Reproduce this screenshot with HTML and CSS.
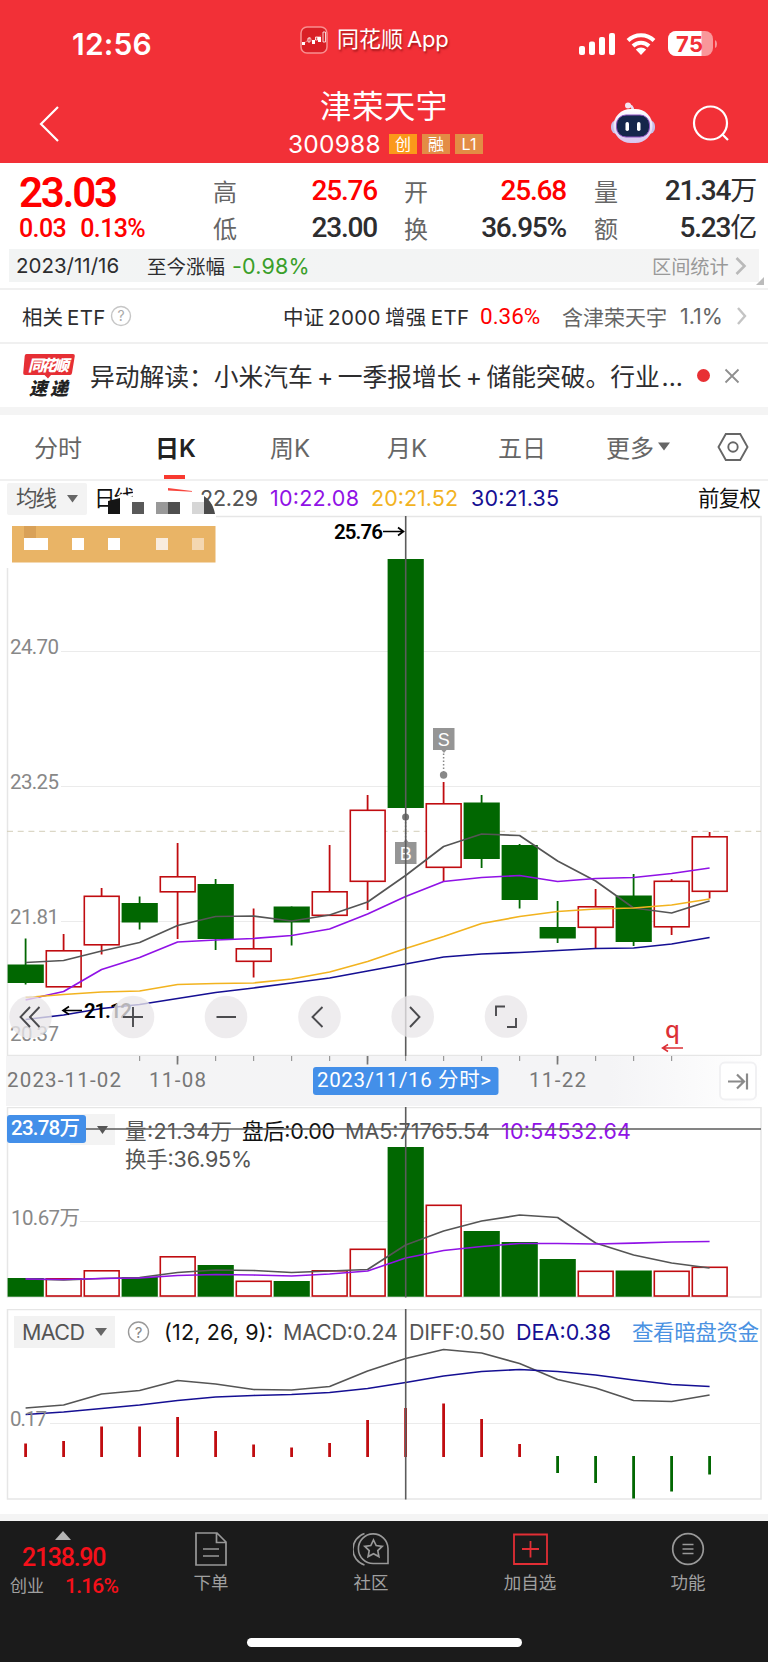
FILE: index.html
```html
<!DOCTYPE html>
<html lang="zh-CN">
<head>
<meta charset="utf-8">
<title>津荣天宇 300988</title>
<link rel="stylesheet" href="styles.css">
</head>
<body>
<header class="top">
  <div class="status">
    <span class="clock">12:56</span>
    <span class="source">
      <svg width="28" height="28" viewBox="0 0 28 28"><rect x="1" y="1" width="26" height="26" rx="6" fill="#d91f26" stroke="#f98f90" stroke-width="1.5"/><path d="M2 17l4-1 4-5 3 6 4-6 4-1" fill="none" stroke="#f7a5a5" stroke-width=".6"/><path d="M2 16h3v3H2zM12 14h3v4h-3zM18 11h3v5h-3z" fill="#fff"/><path d="M8 12h2v4H8zM15.500 11h2v3h-2zM23 6h2.500v10H23z" fill="none" stroke="#fff" stroke-width=".8"/></svg>
      <span class="source-name">同花顺<span class="app">App</span></span>
    </span>
    <span class="signals">
      <svg class="bars" width="36" height="24" viewBox="0 0 36 24"><g fill="#fff"><rect y="14" width="6" height="9" rx="2"/><rect x="10" y="9.500" width="6" height="13.500" rx="2"/><rect x="20" y="5" width="6" height="18" rx="2"/><rect x="30" y="1" width="6" height="22" rx="2"/></g></svg>
      <svg class="wifi" width="30" height="24" viewBox="0 0 30 24"><g fill="none" stroke="#fff" stroke-width="4"><path d="M2 8.500a18.500 18.500 0 0 1 26 0"/><path d="M7 14a11.500 11.500 0 0 1 16 0"/></g><path d="M9.800 17.500a7.500 7.500 0 0 1 10.400 0L15 23z" fill="#fff"/></svg>
      <svg width="50" height="26" viewBox="0 0 50 26"><defs><clipPath id="cell"><rect width="45" height="25" rx="8"/></clipPath></defs><g clip-path="url(#cell)"><rect width="45" height="26" fill="#f9979a"/><rect width="33.500" height="26" fill="#fff"/></g><path d="M47 9q2 1 2 4t-2 4z" fill="#f9979a"/><text x="8" y="20.500" class="cell-text" textLength="27">75</text></svg>
    </span>
  </div>
  <div class="nav">
    <svg class="back" width="22" height="38" viewBox="0 0 22 38"><path d="M20 2L3 19l17 17" fill="none" stroke="#fff" stroke-width="2.200"/></svg>
    <div class="heading">
      <h1>津荣天宇</h1>
      <div class="code"><span class="digits">300988</span><b class="tag hot">创</b><b class="tag">融</b><b class="tag">L1</b></div>
    </div>
    <div class="tools">
      <svg width="44" height="42" viewBox="0 0 44 42"><defs><linearGradient id="shell" x2="0" y2="1"><stop stop-color="#fff"/><stop offset="1" stop-color="#d8c5ee"/></linearGradient></defs><path d="M16 3q6 0 6 6" fill="none" stroke="#eadcf0" stroke-width="2.500"/><circle cx="17" cy="3.500" r="3" fill="#f4e4f2"/><rect x="0" y="18" width="44" height="14" rx="6" fill="#c5bfe8"/><rect x="2.500" y="7" width="39" height="34" rx="17" fill="url(#shell)"/><rect x="5.500" y="13" width="33" height="22" rx="9.500" fill="#15264b" stroke="#8b50bd"/><rect x="14.500" y="20" width="3.500" height="9" rx="1.700" fill="#fff"/><rect x="26" y="20" width="3.500" height="9" rx="1.700" fill="#fff"/></svg>
      <svg width="38" height="38" viewBox="0 0 38 38"><circle cx="18.500" cy="18" r="16.500" fill="none" stroke="#fff" stroke-width="2.200"/><path d="M30 29l6 6" stroke="#fff" stroke-width="2.200"/></svg>
    </div>
  </div>
</header>

<section class="quote">
  <div class="last"><span class="price">23.03</span><span class="delta"><i>0.03</i><i>0.13%</i></span></div>
  <div class="stats">
    <span>高</span><b class="up">25.76</b><span>开</span><b class="up">25.68</b><span>量</span><b>21.34<em>万</em></b>
    <span>低</span><b>23.00</b><span>换</span><b>36.95%</b><span>额</span><b>5.23<em>亿</em></b>
  </div>
</section>

<section class="range">
  <div class="range-bar">
    <span class="range-date">2023/11/16</span><span class="range-label">至今涨幅</span><span class="range-value">-0.98%</span>
    <span class="range-link">区间统计</span>
    <svg width="12" height="20" viewBox="0 0 12 20"><path d="M1.500 2l8 8-8 8" fill="none" stroke="#b9b9b9" stroke-width="2.600"/></svg>
  </div>
  <i class="fold"></i>
</section>

<section class="etf">
  <span class="c1">相关<u>ETF</u></span>
  <svg width="22" height="22" viewBox="0 0 22 22"><circle cx="11" cy="11" r="9.500" fill="none" stroke="#c6c6c6" stroke-width="1.400"/><text x="11" y="16" class="hint">?</text></svg>
  <span class="c2">中证<u>2000</u><u>增强</u><u>ETF</u></span><span class="c3">0.36%</span><span class="c4">含津荣天宇</span><span class="c5">1.1%</span>
  <svg width="12" height="20" viewBox="0 0 12 20"><path d="M2 2l7 8-7 8" fill="none" stroke="#c4c4c4" stroke-width="2.400"/></svg>
</section>

<section class="news">
  <svg width="54" height="46" viewBox="0 0 54 46"><path d="M4.500 1H51q2 0 1.800 2L50 20q-.3 2-2 2H29l-3 3.500L22.500 22H3q-2 0-1.800-2L2.700 3q.2-2 1.800-2z" fill="#e62f35"/><text x="6" y="18" class="badge-a" textLength="41">同花顺</text><text x="7" y="42" class="badge-b" textLength="39">速递</text></svg>
  <span class="news-text">异动解读：小米汽车<u>+</u>一季报增长<u>+</u>储能突破。行业<u>...</u></span>
  <i class="dot"></i>
  <svg width="16" height="16" viewBox="0 0 16 16"><path d="M1.500 1.500l13 13m0-13l-13 13" stroke="#8f8f8f" stroke-width="1.800"/></svg>
</section>

<nav class="tabs">
  <span>分时</span><span class="on">日K</span><span>周K</span><span>月K</span><span>五日</span><span>更多<svg class="caret" width="12" height="9" viewBox="0 0 12 9"><path d="M0 .5h12L6 8.500z" fill="#666"/></svg></span>
  <svg width="32" height="30" viewBox="0 0 32 30"><path d="M8.800 2h14.400L30.500 15l-7.300 13H8.800L1.500 15z" fill="none" stroke="#666" stroke-width="1.900"/><circle cx="16" cy="15" r="4.700" fill="none" stroke="#666" stroke-width="1.900"/></svg>
</nav>

<main>
<svg class="chart" width="768" height="626" viewBox="0 481 768 626">
  <defs><linearGradient id="axis"><stop stop-color="#f4f4f5"/><stop offset=".8" stop-color="#f4f4f6"/><stop offset="1" stop-color="#fff"/></linearGradient></defs>
  <rect x="7" y="483" width="80" height="32" rx="2" fill="#f3f3f3"/>
  <text x="16" y="505.500" class="t cjk" textLength="41">均线</text><path d="M67 495h11l-5.500 7.500z" fill="#666"/>
  <text x="94" y="505.500" class="t cjk black" textLength="41">日线</text>
  <text x="200" y="506" class="t" textLength="58">22.29</text>
  <text x="270" y="506" class="t purple" textLength="89">10:22.08</text>
  <text x="371" y="506" class="t gold" textLength="87">20:21.52</text>
  <text x="471" y="506" class="t navy" textLength="88">30:21.35</text>
  <text x="698" y="505.500" class="t cjk black" textLength="63">前复权</text>
  <path d="M216 516.500H761V1055.500" class="frame"/><path d="M7.500 568V1055.500H761" class="frame"/>
  <path d="M108 506l5-6 8-6 14 3V520h-27z" fill="#fff"/><path d="M133 482h60q5 8 9 14 10 8 14 20h-83z" fill="#fff"/>
  <text x="200" y="506" class="t fade" textLength="58">22.29</text>
  <path d="M108 501l12-3v16h-12z" fill="#151515"/><rect x="132" y="502" width="12" height="12" fill="#595959"/><rect x="156" y="502" width="12" height="12" fill="#999"/><rect x="168" y="502" width="12" height="12" fill="#4f4f4f"/><rect x="192" y="502" width="12" height="12" fill="#d6d6d6"/><path d="M204 496q9 6 11 18h-11z" fill="#4b4b4b"/><path d="M168 488l24 3v.8l-24-1.200z" fill="#f8453d"/>
  <rect x="12" y="526" width="203.500" height="36.500" fill="#e9b466"/><rect x="24" y="526" width="12" height="12" fill="#d9a158"/><path d="M24 538h24v12H24zM72 538h12v12H72zM108 538h12v12h-12z" fill="#fff"/><rect x="156" y="538" width="12" height="12" fill="#f9ecde"/><rect x="192" y="538" width="12" height="12" fill="#f4d7b1"/>
  <path d="M61 651.500H761M61 786.500H761M61 921.500H761" class="grid"/>
  <g class="scale"><text x="10" y="654" textLength="49">24.70</text><text x="10" y="789" textLength="49">23.25</text><text x="10" y="924" textLength="49">21.81</text></g>
  <path d="M7 831.300H761" stroke="#d3ceb8" stroke-dasharray="6 4.700"/>
  <g id="candles"></g>
  <text x="334" y="539" class="mark" textLength="49">25.76</text><path d="M383 531.500h20m-5-4l5.500 4-5.500 4" class="arrow"/>
  <path d="M82 1010.500H64m5-4l-6 4 6 4" class="arrow"/><text x="84" y="1018" class="mark" textLength="48">21.12</text>
  <text x="10" y="1041" class="scale" textLength="49">20.37</text>
  <path d="M405.600 822v20M443.600 750v22" stroke="#888" stroke-width="1.500" stroke-dasharray="1.500 2"/><circle cx="405.600" cy="817" r="3.500" fill="#777"/><circle cx="443.600" cy="775" r="3.700" fill="#888"/>
  <path d="M434 728h20.500v22h-8l-2.500 3-2.500-3H433v-22z" fill="#959595"/><text x="443.700" y="746" class="flag">S</text>
  <path d="M395 842h8.500l2.500-3 2.500 3h8v22H395z" fill="#959595"/><text x="405.700" y="860" class="flag">B</text>
  <path d="M405.700 516V1061" class="cross"/>
  <g fill="#e9e7e9" fill-opacity=".78"><circle cx="30.500" cy="1017" r="21.300"/><circle cx="133" cy="1017" r="21.300"/><circle cx="226" cy="1017" r="21.300"/><circle cx="319.500" cy="1017" r="21.300"/><circle cx="412.700" cy="1016.500" r="21.300"/><circle cx="506" cy="1016.500" r="21.300"/></g>
  <path d="M30 1007l-9.500 10 9.500 10m9.500-20l-9.500 10 9.500 10M123 1017h20m-10-10v20M216.500 1017H236M322.500 1007l-10 10 10 10M410 1007l9.500 10-9.500 10M496 1016v-9.500h9M516 1018v9h-9" fill="none" stroke="#4b4b4e" stroke-width="1.900"/>
  <text x="665" y="1037.500" class="q">q</text><path d="M683 1048h-20m5-3.500l-5.500 3.500 5.500 3.500" fill="none" stroke="#dc3036" stroke-width="1.500"/>
  <rect x="6" y="1056" width="755" height="50" fill="url(#axis)"/><path id="ticks" stroke="#999" stroke-width="1.200"/><path d="M177.500 1056v8.500m190-8.500v8.500m190-8.500v8.500" stroke="#777" stroke-width="1.700"/>
  <g class="date"><text x="7" y="1087" textLength="114">2023-11-02</text><text x="149" y="1087" textLength="57">11-08</text><text x="529" y="1087" textLength="57">11-22</text></g>
  <rect x="313" y="1067" width="185.500" height="28" rx="3" fill="#438fe9"/><text x="317" y="1087" class="date sel" textLength="174">2023/11/16 分时&gt;</text>
  <rect x="720" y="1062.500" width="36" height="37" rx="5" fill="#fff" stroke="#f1f1f3" stroke-width="2"/><path d="M728 1081.500h15m-6-7l7 7-7 7M747 1073.500v16" fill="none" stroke="#8a8a8a" stroke-width="2.200"/>
</svg>
<svg class="chart" width="768" height="202" viewBox="0 1107 768 202">
  <rect x="7.500" y="1107.500" width="753.500" height="189.500" class="frame"/><path d="M80 1221.500H761" class="grid"/>
  <rect x="70" y="1114" width="45" height="31" fill="#f3f3f3"/>
  <g id="volume"></g>
  <text x="125" y="1138.500" class="t" textLength="107">量:21.34万</text><text x="242" y="1138.500" class="t black" textLength="93">盘后:0.00</text><text x="345" y="1138.500" class="t" textLength="145">MA5:71765.54</text><text x="501" y="1138.500" class="t purple" textLength="130">10:54532.64</text>
  <text x="125" y="1167" class="t" textLength="127">换手:36.95%</text>
  <text x="11" y="1225" class="scale" textLength="69">10.67万</text>
  <path d="M97 1126h11l-5.500 8z" fill="#555"/>
  <path d="M86 1129H761M405.700 1107V1297.500" class="cross"/>
  <rect x="7" y="1115" width="79" height="28" rx="3" fill="#438fe9"/><text x="11" y="1135" class="date sel bold" textLength="69">23.78万</text>
</svg>
<svg class="chart" width="768" height="205" viewBox="0 1309 768 205">
  <rect x="7.500" y="1309.500" width="753.500" height="189.500" class="frame"/><path d="M50 1423.500H761" class="grid"/>
  <rect x="14" y="1316" width="101" height="32" fill="#f2f2f2"/><text x="22" y="1340" class="t" textLength="63">MACD</text><path d="M95 1328h12l-6 8z" fill="#666"/>
  <circle cx="138.500" cy="1332" r="10" fill="none" stroke="#999" stroke-width="1.400"/><text x="138.500" y="1337.500" class="hint dark">?</text>
  <text x="164" y="1340" class="t black" textLength="109">(12, 26, 9):</text><text x="283" y="1340" class="t" textLength="115">MACD:0.24</text><text x="409" y="1340" class="t" textLength="96">DIFF:0.50</text><text x="516" y="1340" class="t navy" textLength="95">DEA:0.38</text><text x="632" y="1340" class="t link" textLength="127">查看暗盘资金</text>
  <g id="macd"></g>
  <text x="10" y="1426" class="scale" textLength="37">0.17</text>
  <path d="M405.700 1309V1499.500" class="cross"/>
</svg>
</main>

<footer class="dock">
  <div class="index"><svg width="16" height="9" viewBox="0 0 16 9"><path d="M0 9L8 0l8 9z" fill="#b5b5b5"/></svg><b>2138.90</b><span><small>创业</small><i>1.16%</i></span></div>
  <div class="item"><svg width="32" height="34" viewBox="0 0 32 34"><path d="M1 1h21l9 9v23H1zM21.500 1v9.500H31M8 17h16M8 24h16" fill="none" stroke="#999" stroke-width="1.700"/></svg><span>下单</span></div>
  <div class="item"><svg width="36" height="34" viewBox="0 0 36 34"><path d="M11.500 1.500A16.500 16.500 0 0 0 11.500 33M35 31.500H20.500a14.800 14.800 0 1 1 14.500-15z" fill="none" stroke="#999" stroke-width="1.600"/><path d="M20.500 8l2.700 5.500 6 .9-4.400 4.200 1.100 6-5.400-2.800-5.400 2.800 1.100-6-4.400-4.200 6-.9z" fill="none" stroke="#999" stroke-width="1.700"/></svg><span>社区</span></div>
  <div class="item"><svg width="35" height="34" viewBox="0 0 35 34"><path d="M1 2.500h33v29.500H1zM9 17h17M17.500 9v16.500" fill="none" stroke="#e22e35" stroke-width="1.800"/></svg><span>加自选</span></div>
  <div class="item"><svg width="34" height="34" viewBox="0 0 34 34"><circle cx="17" cy="17" r="15.300" fill="none" stroke="#999" stroke-width="1.700"/><path d="M11.500 12.500h11M11.500 17h11M11.500 21.500h11" stroke="#999" stroke-width="1.700"/></svg><span>功能</span></div>
  <i class="home"></i>
</footer>
<script src="chart.js"></script>
</body>
</html>
```

FILE: styles.css
```css
* { box-sizing: border-box; }
body { margin: 0; width: 768px; background: #fff; color: #2d2d2f; font-family: Inter, "Noto Sans CJK SC", sans-serif; white-space: nowrap; }
h1, i, em, b, u, small { font-style: normal; font-weight: 400; text-decoration: none; margin: 0; }
svg { display: block; flex: none; }

.top { height: 163px; background: #f23037; color: #fff; }
.status { height: 84px; display: flex; align-items: center; padding: 0 50px 0 72px; }
.clock { width: 229px; font-size: 30px; font-weight: 600; letter-spacing: .2px; padding-top: 4px; }
.source { width: 280px; display: flex; align-items: center; gap: 9px; padding-bottom: 4px; }
.source-name { font-size: 22px; line-height: 28px; padding-bottom: 2px; text-shadow: 1px 2px 2px rgba(90, 0, 0, .5); }
.app { margin-left: 4px; letter-spacing: -.3px; }
.signals { display: flex; align-items: center; padding-top: 4px; }
.bars { margin-right: 11px; }
.wifi { margin-right: 12px; }
.cell-text { font: 700 22px Inter, sans-serif; fill: #f23037; }
.nav { height: 79px; display: flex; padding-left: 38px; }
.back { margin-top: 21px; }
.heading { width: 551px; padding-left: 228px; }
.heading h1 { font: 400 31.500px/36px "Noto Sans CJK SC", sans-serif; letter-spacing: .4px; padding-left: 32px; margin-top: 2px; }
.code { display: flex; align-items: center; height: 44px; }
.digits { font-size: 24.500px; letter-spacing: .2px; width: 101px; }
.tag { width: 28px; height: 20px; margin-right: 5px; background: #e38c45; font-size: 16px; line-height: 20px; text-align: center; }
.tag.hot { background: #fb991a; }
.tools { display: flex; gap: 37px; padding-top: 18px; }
.tools svg + svg { margin-top: 3px; }

.quote { display: flex; height: 86px; font-family: Roboto, "Noto Sans CJK SC", sans-serif; }
.last { width: 213px; padding: 6px 0 0 19px; color: #f00; }
.price { display: block; font-size: 42px; line-height: 47px; font-weight: 600; letter-spacing: -2.200px; }
.delta { display: flex; gap: 14px; font-size: 25px; line-height: 26px; letter-spacing: -.6px; font-weight: 500; }
.delta i { font-weight: 500; }
.stats { display: grid; grid-template-rows: 37px 37px; grid-template-columns: 25px 139px 51px 138px 52px 138px; padding-top: 9px; align-items: center; }
.stats span { font-size: 24px; color: #666; }
.stats span:nth-of-type(3n + 2), .stats span:nth-of-type(3n) { text-align: right; }
.stats b { font-size: 28px; line-height: 37px; font-weight: 500; letter-spacing: -1.200px; text-align: right; }
.stats em { font-size: 27px; line-height: 1; }
.stats .up { color: #f00; }

.range { height: 41px; display: flex; border-bottom: 2px solid #f0f0f0; }
.range-bar { width: 750px; height: 33px; margin-left: 9px; background: linear-gradient(90deg, #f2f4f4, #f4f4f4); display: flex; align-items: center; padding-left: 7px; }
.range-date { width: 131px; font-size: 20.500px; letter-spacing: 0; }
.range-label { width: 85px; font-size: 19.500px; }
.range-value { width: 420px; font-size: 21.500px; letter-spacing: .2px; color: #3a9f2a; }
.range-link { width: 83px; font-size: 19.200px; color: #999; }
.fold { align-self: flex-end; border: 4.500px solid transparent; border-right-color: #bbb; border-bottom-color: #bbb; margin: 0 0 3px -3px; }

.etf { height: 54px; border-bottom: 2px solid #f0f0f0; display: flex; align-items: center; padding-left: 22px; font-size: 20.500px; }
.etf u { margin-left: 4px; letter-spacing: .4px; }
.c1 { width: 88px; }
.c2 { width: 197px; margin-left: 151px; }
.c3 { width: 82px; color: #f00; font-family: Roboto, sans-serif; font-size: 22.500px; }
.c4 { width: 118px; color: #666; font-size: 21px; }
.c5 { width: 56px; color: #666; font-size: 21.500px; }

.news { height: 63px; display: flex; align-items: center; padding-left: 22px; }
.badge-a { font: italic 900 15.500px "Noto Sans CJK SC", sans-serif; fill: #fff; }
.badge-b { font: italic 900 18px "Noto Sans CJK SC", sans-serif; fill: #222; }
.news-text { width: 606px; margin-left: 14px; padding-bottom: 2px; font-size: 24.750px; }
.news-text u { display: inline-block; width: 25px; text-align: center; }
.dot { width: 13px; height: 13px; border-radius: 50%; background: #e83034; margin: 0 14px 0 1px; }

.tabs { height: 74px; border-top: 8px solid #f4f4f4; border-bottom: 2px solid #f0f0f0; display: flex; align-items: center; padding-left: 34px; font-size: 24px; color: #666; }
.tabs span { display: flex; align-items: center; height: 64px; padding-bottom: 2px; width: 111px; }
.tabs span:nth-child(1) { width: 121px; }
.tabs span:nth-child(2) { width: 115px; }
.tabs span:nth-child(3) { width: 117px; }
.tabs span:nth-child(5) { width: 108px; }
.tabs span:nth-child(6) { width: 111px; }
.caret { margin-left: 4px; }
.tabs .on { color: #222; font-weight: 600; background: linear-gradient(#f8392f, #f8392f) 9px 60px / 21px 5px no-repeat; }

.t { font: 400 21.500px Inter, "Noto Sans CJK SC", sans-serif; fill: #555; }
.cjk { font-family: "Noto Sans CJK SC", sans-serif; }
.black { fill: #111; }
.fade { fill-opacity: .25; }
.purple { fill: #9012e6; }
.gold { fill: #f2b31f; }
.navy { fill: #150f93; }
.link { fill: #4b92e2; }
.scale { font: 400 20.500px Roboto, "Noto Sans CJK SC", sans-serif; fill: #888; }
.mark { font: 600 20.500px Roboto, sans-serif; fill: #000; }
.date { font: 400 20.500px Roboto, "Noto Sans CJK SC", sans-serif; fill: #777; }
.sel { fill: #fff; }
.bold { font-weight: 500; }
.flag { font: 500 18px "Liberation Sans", sans-serif; fill: #fff; text-anchor: middle; }
.q { font: 500 24px "Noto Sans", sans-serif; fill: #dc3036; }
.hint { font: 400 14px Inter, sans-serif; fill: #aaa; text-anchor: middle; }
.dark { fill: #888; font-size: 15px; }
.frame { fill: none; stroke: #e6e6e6; stroke-width: 1.500; }
.grid { stroke: #ebebeb; }
.cross { fill: none; stroke: #5c5c5c; stroke-width: 1.600; }
.arrow { fill: none; stroke: #000; stroke-width: 1.700; }

.dock { position: relative; height: 148px; border-top: 7px solid #f4f4f4; background: #1b1b1b; display: grid; grid-template-columns: 131px 160px 160px 158px 158px; color: #a0a0a0; }
.index { color: #f5101a; font-family: Roboto, "Noto Sans CJK SC", sans-serif; padding-top: 10px; }
.index svg { margin-left: 55px; }
.index b { display: block; font-size: 25px; line-height: 32px; font-weight: 500; letter-spacing: -1.300px; padding: 2px 0 0 22px; }
.index span { display: flex; align-items: center; line-height: 24px; padding-left: 10px; }
.index small { width: 55px; font-size: 17px; color: #a0a0a0; }
.index i { font-size: 21px; font-weight: 500; letter-spacing: -.800px; }
.item { display: flex; flex-direction: column; align-items: center; padding-top: 11px; font-size: 17.500px; line-height: 26px; gap: 4px; }
.home { position: absolute; left: 247px; bottom: 15px; width: 275px; height: 9px; border-radius: 5px; background: #fff; }
```

FILE: chart.js
```js
const NS = 'http://www.w3.org/2000/svg';
const RED = '#c00c10', GREEN = '#016701';
const cx = i => 25.6 + 38 * i;

function add(parent, tag, attrs) {
  const el = document.createElementNS(NS, tag);
  for (const k in attrs) el.setAttribute(k, attrs[k]);
  parent.appendChild(el);
}
function box(g, i, top, bottom, up) {
  if (up) add(g, 'rect', { x: cx(i) - 17.3, y: top + .3, width: 34.8, height: bottom - top, fill: '#fff', stroke: RED, 'stroke-width': 1.6 });
  else add(g, 'rect', { x: cx(i) - 18, y: top, width: 36.2, height: bottom - top, fill: GREEN });
}
function line(g, ys, color) {
  add(g, 'polyline', { points: ys.map((y, i) => cx(i) + ',' + y).join(' '), fill: 'none', stroke: color, 'stroke-width': 1.7, 'stroke-linejoin': 'round' });
}

// up, high, body top, body bottom, low
const candles = [
  [0, 938.5, 964.5, 983, 984.5], [1, 934, 950.5, 986.5, 986.5], [1, 888, 896, 944.5, 954.5], [0, 896.5, 903, 922.5, 929.5],
  [1, 843, 876.5, 891.5, 939], [0, 879, 884, 939, 950], [1, 908.5, 948.5, 961, 977.5], [0, 906.5, 906.5, 922.5, 945.5],
  [1, 845, 891.5, 915, 915], [1, 795, 810, 881, 910], [0, 559, 559, 808, 808], [1, 782, 803.5, 867, 881.5],
  [0, 795, 802.5, 859, 868], [0, 844, 845, 900, 908.5], [0, 901, 927, 938.5, 943], [1, 889, 906.5, 927, 948.5],
  [0, 874, 895.5, 942, 946], [1, 879, 881, 926.5, 935], [1, 832, 836.5, 891, 898.5]
];
const k = document.getElementById('candles');
candles.forEach(([up, hi, top, bot, lo], i) => {
  add(k, 'path', { d: `M${cx(i)} ${hi}V${lo}`, stroke: up ? RED : GREEN, 'stroke-width': 1.8 });
  box(k, i, top, bot, up);
});
line(k, [962.5,960.5,951,942.5,925.5,916.5,916,921,915,902,875.5,846.5,834,835.5,861,881,908,913,901], '#555');
line(k, [1000,991.5,969.5,957.5,942,940,938.5,935.5,929,914,896.5,881.5,877.5,875.5,881.5,878.5,877.5,873.5,868], '#9012e6');
line(k, [997.5,994.5,992,991,984.5,983.5,983,979,972,961.5,948.5,936.5,923.5,916.5,911.5,909,908,905,899], '#f2b31f');
line(k, [1019.5,1015,1008.5,1004.5,998.5,992.5,988,983,978,971,964,957,954,952.5,950.5,948.5,948,944,937.5], '#150f93');
document.getElementById('ticks').setAttribute('d',
  Array.from({ length: 15 }, (_, n) => `M${cx(n + 3)} 1056v5`).join(''));

const volume = [[0,1278],[1,1278.5],[1,1270.5],[0,1277],[1,1256.5],[0,1265],[1,1281],[0,1281],[1,1270.5],[1,1249],
  [0,1147],[1,1205],[0,1231],[0,1242],[0,1259],[1,1271],[0,1270.5],[1,1271],[1,1267]];
const v = document.getElementById('volume');
volume.forEach(([up, top], i) => box(v, i, top, up ? 1295.7 : 1296.7, up));
line(v, [1279,1280,1278.5,1277.5,1272.5,1270,1270.5,1272.5,1271,1269.5,1245,1231,1221,1215,1217.5,1243,1255,1263,1268], '#555');
line(v, [1279,1279.5,1278.5,1278,1275.5,1274.5,1275,1276,1274,1271,1258,1250.5,1246.5,1243.5,1243.5,1244,1243.2,1242,1241.5], '#9012e6');

const m = document.getElementById('macd');
[1443.5,1441,1426.5,1426.5,1417,1431,1444.5,1447.5,1443,1420,1408,1403.5,1419,1444,1473,1483,1498.5,1491.5,1474.5]
  .forEach((y, i) => add(m, 'path', { d: `M${cx(i)} ${i < 14 ? 1457 : 1456}V${y}`, stroke: i < 14 ? RED : GREEN, 'stroke-width': 2.8 }));
line(m, [1408,1405,1394,1390.5,1380.5,1384,1389.5,1390,1386.5,1371,1358.5,1349.5,1353,1363.5,1379.5,1388,1400.5,1401.5,1395], '#555');
line(m, [1414.5,1412,1408.5,1405,1400.5,1397,1395.5,1394.5,1392.5,1388.5,1382.5,1376,1371.5,1369.5,1371.5,1375,1380,1384.5,1386.5], '#150f93');
```
